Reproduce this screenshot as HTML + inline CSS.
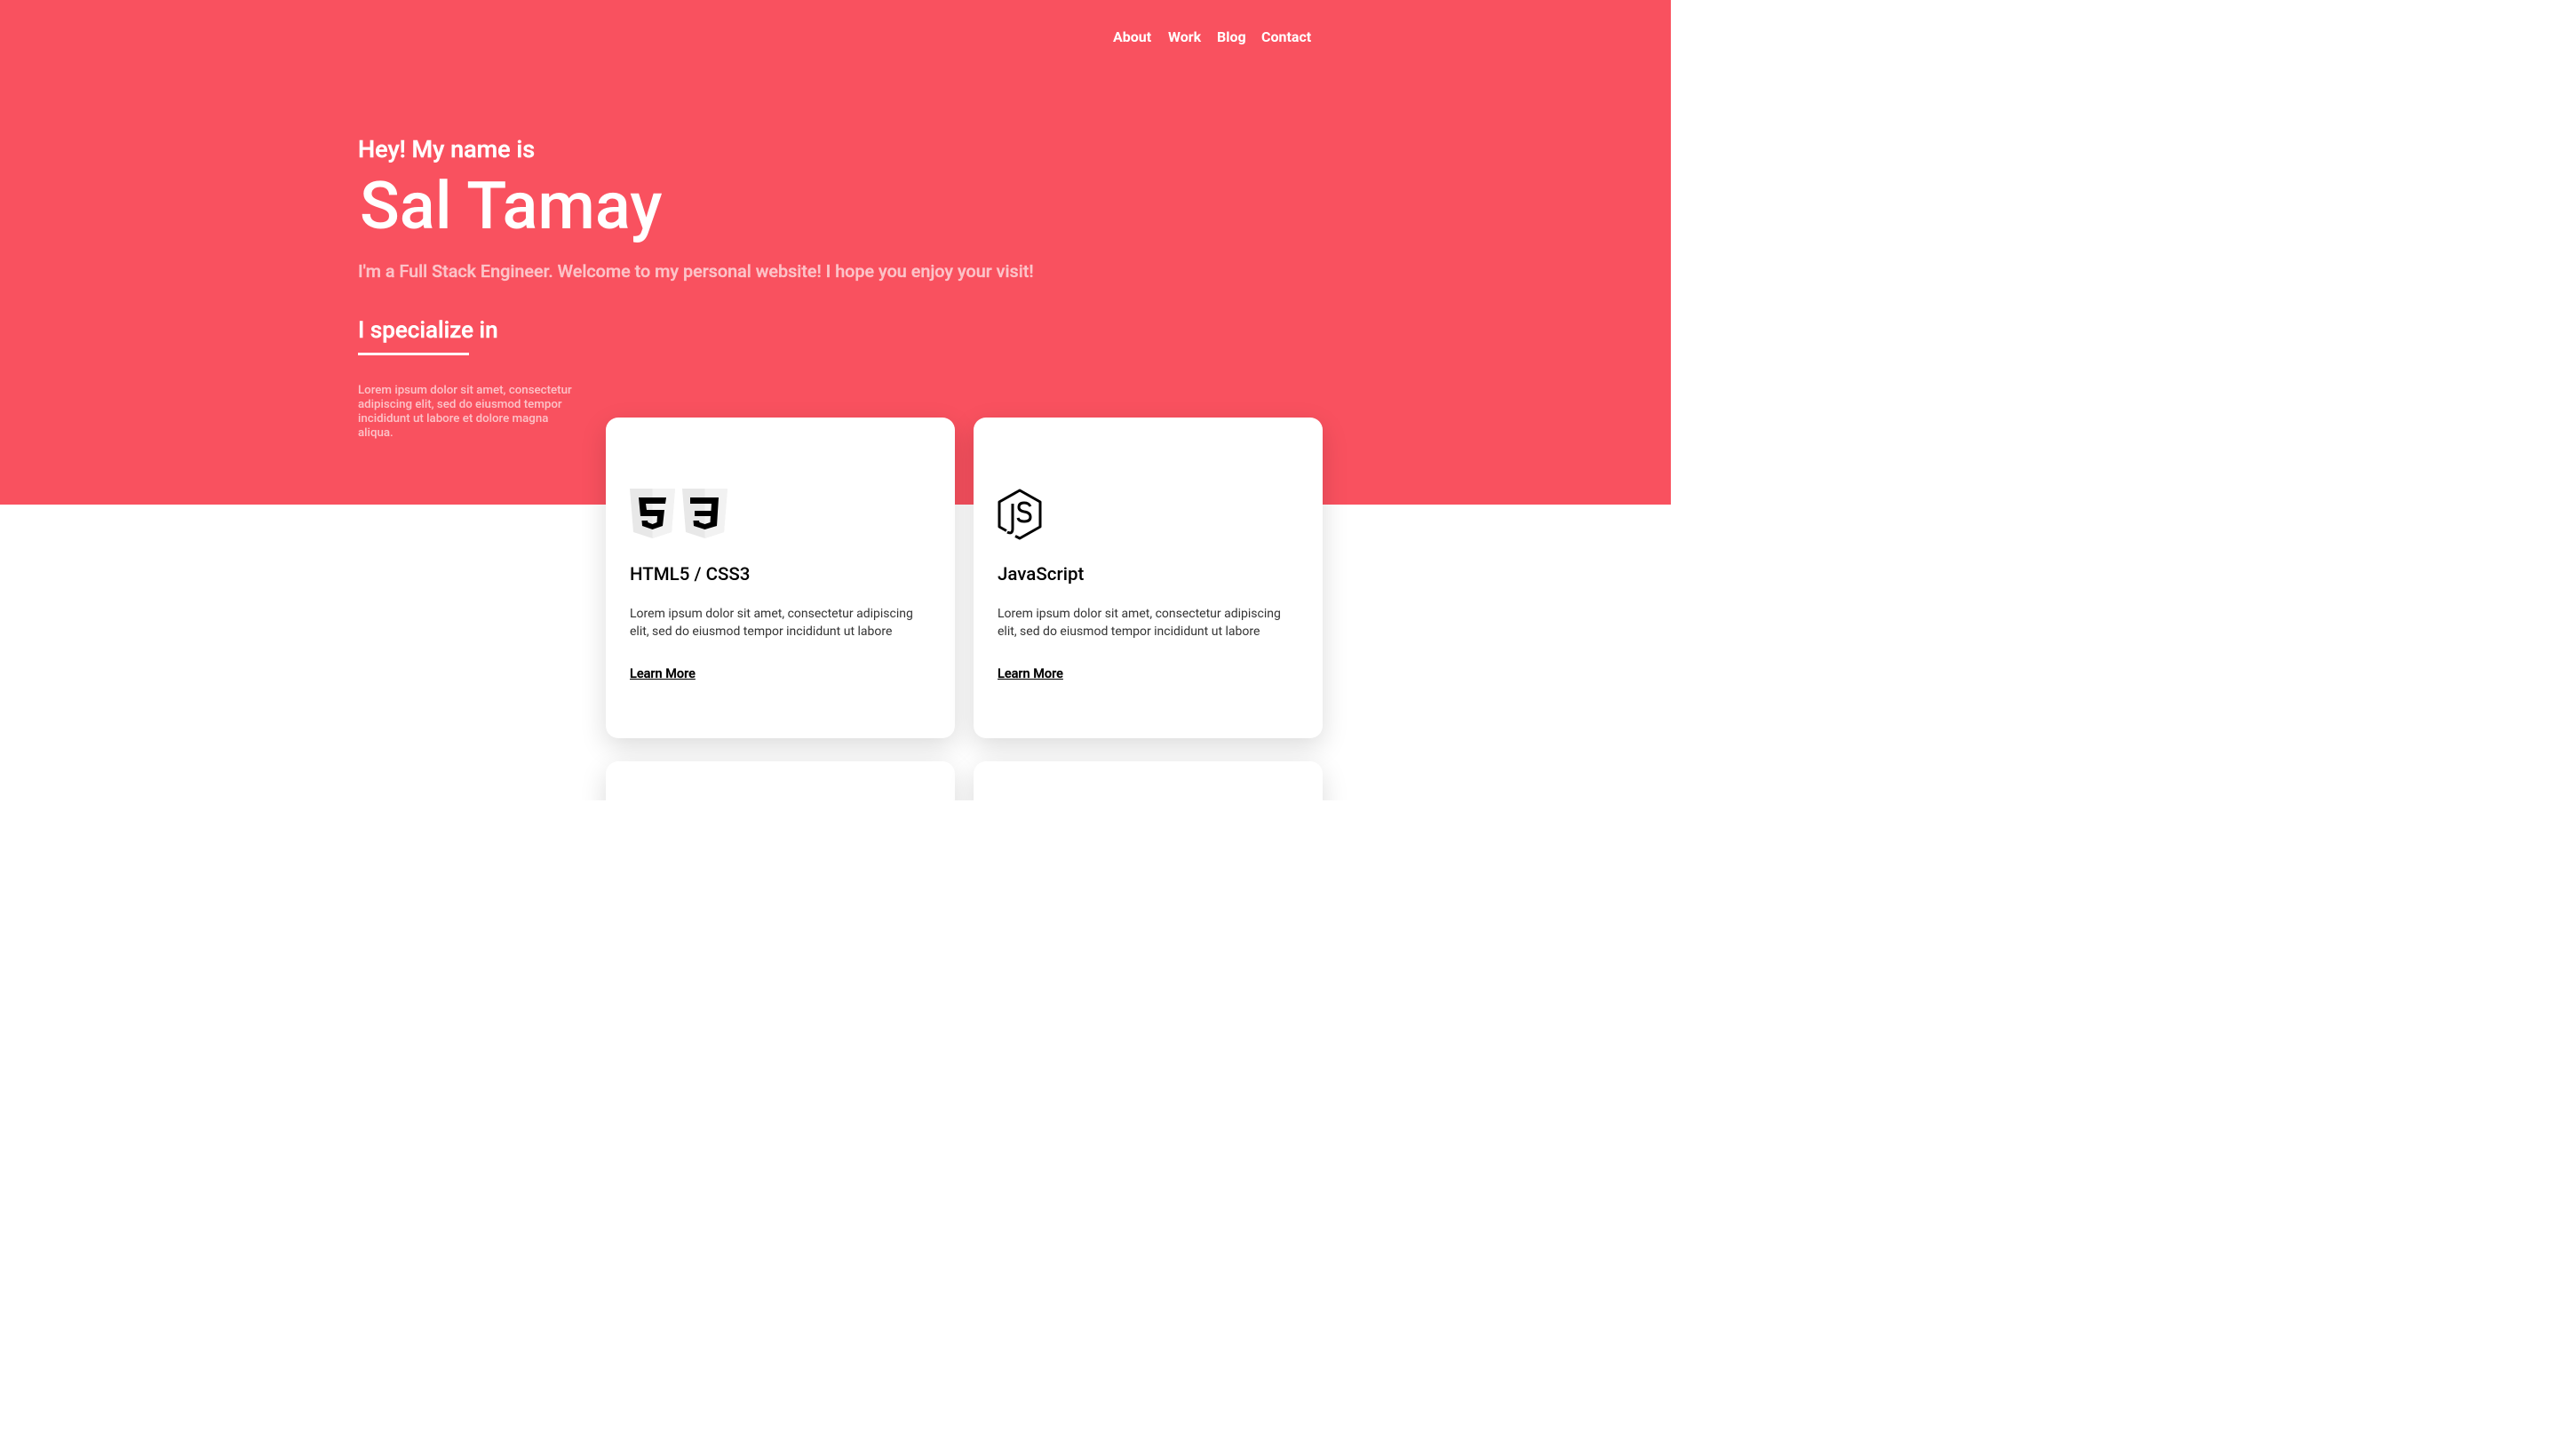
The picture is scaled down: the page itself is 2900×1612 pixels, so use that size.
<!DOCTYPE html>
<html><head><meta charset="utf-8"><style>
*{margin:0;padding:0;box-sizing:border-box}
html,body{width:2900px;height:1612px;background:#fff;overflow:hidden;font-family:"Roboto","Liberation Sans",sans-serif}
#page{position:absolute;left:0;top:0;width:1881px;height:901px;overflow:hidden;background:#fff}
#hero{position:absolute;left:0;top:0;width:1881px;height:568px;background:#f9515f}
.t{position:absolute;white-space:nowrap;line-height:1}
.nav{color:#fff;font-weight:bold;font-size:16px;top:34px}
.card{position:absolute;width:393px;background:#fff;border-radius:14px;box-shadow:0 10px 30px rgba(0,0,0,.14)}
.card h3{position:absolute;left:27px;top:165px;font-size:20.5px;font-weight:500;color:#000;white-space:nowrap}
.card p{position:absolute;left:27px;top:212px;width:325px;font-size:14px;line-height:19.5px;color:#333}
.card a{position:absolute;left:27px;top:280px;font-size:14.5px;font-weight:500;color:#000;text-decoration:underline;-webkit-text-stroke:0.3px #000}
</style></head><body>
<div id="page">
<div id="hero"></div>
<div class="t nav" style="left:1253px">About</div>
<div class="t nav" style="left:1315px">Work</div>
<div class="t nav" style="left:1370px">Blog</div>
<div class="t nav" style="left:1420px">Contact</div>

<div class="t" style="left:403px;top:155px;font-size:27px;font-weight:500;color:#fff;-webkit-text-stroke:0.4px #fff">Hey! My name is</div>
<div class="t" style="left:405px;top:196px;font-size:74px;font-weight:500;color:#fff">Sal Tamay</div>
<div class="t" style="left:403px;top:296px;font-size:19.8px;font-weight:500;color:#fcc3c8;-webkit-text-stroke:0.3px #fcc3c8">I'm a Full Stack Engineer. Welcome to my personal website! I hope you enjoy your visit!</div>
<div class="t" style="left:403px;top:359px;font-size:26px;font-weight:500;color:#fff;-webkit-text-stroke:0.4px #fff">I specialize in</div>
<div style="position:absolute;left:403px;top:397px;width:125px;height:3px;background:#fff"></div>
<div style="position:absolute;left:403px;top:432px;width:242px;font-size:13.3px;line-height:16px;font-weight:500;color:#fcc3c8">Lorem ipsum dolor sit amet, consectetur adipiscing elit, sed do eiusmod tempor incididunt ut labore et dolore magna aliqua.</div>

<div class="card" style="left:682px;top:470px;height:361px">
 <svg style="position:absolute;left:27px;top:80px" width="112" height="58" viewBox="0 0 112 58">
  <path d="M0 0H51L47 49L25.5 56L4 49Z" fill="#e8e8e8"/><path d="M25.5 0H51L47 49L25.5 56Z" fill="#f2f2f2"/>
  <path d="M10 10H41L40 17H18L19 24H39L37 42L25.5 46L14 42L13.5 36H20L20.5 38L25.5 40L30.5 38L31 31H12Z" fill="#000"/>
  <path d="M59 0H110L106 49L84.5 56L63 49Z" fill="#e8e8e8"/><path d="M84.5 0H110L106 49L84.5 56Z" fill="#f2f2f2"/>
  <path d="M68 10H100L98 42L84.5 46L72 42L71.5 36H78L78.5 38L84.5 40L90.5 38L91 31H73V25H91.5L92 17H68Z" fill="#000"/>
 </svg>
 <h3>HTML5 / CSS3</h3>
 <p>Lorem ipsum dolor sit amet, consectetur adipiscing elit, sed do eiusmod tempor incididunt ut labore</p>
 <a>Learn More</a>
</div>
<div class="card" style="left:1096px;top:470px;height:361px">
 <svg style="position:absolute;left:26px;top:80px" width="52" height="58" viewBox="0 0 52 58">
  <path d="M21 53.5L26 56L49 43V15L26 2L3 15V43L11 47.5" fill="none" stroke="#000" stroke-width="3" stroke-linejoin="round"/>
  <path d="M18 17V45Q18 52 12 49" fill="none" stroke="#000" stroke-width="3"/>
  <path d="M38 20Q36 16 31 16Q25 16 25 21Q25 25 31 26Q38 27 38 32Q38 37 31 37Q25 37 24 33" fill="none" stroke="#000" stroke-width="3"/>
 </svg>
 <h3>JavaScript</h3>
 <p>Lorem ipsum dolor sit amet, consectetur adipiscing elit, sed do eiusmod tempor incididunt ut labore</p>
 <a>Learn More</a>
</div>
<div class="card" style="left:682px;top:857px;height:361px"></div>
<div class="card" style="left:1096px;top:857px;height:361px"></div>
</div>
</body></html>
